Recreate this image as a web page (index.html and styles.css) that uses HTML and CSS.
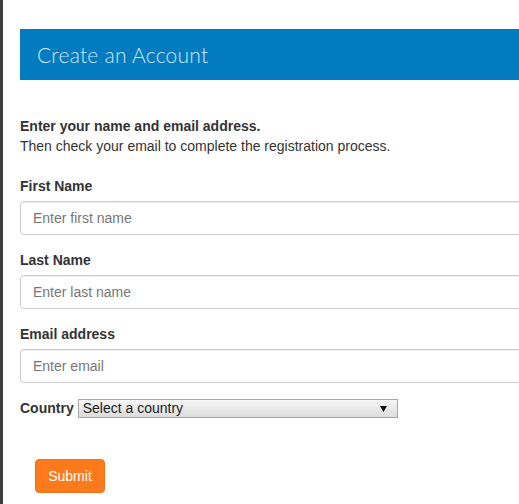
FILE: index.html
```html
<!DOCTYPE html>
<html>
<head>
<meta charset="utf-8">
<link rel="stylesheet" href="styles.css">
</head>
<body>
<div class="page">
  <div class="header"><h1 class="title">Create an Account</h1></div>
  <div class="intro">
    <p class="lead">Enter your name and email address.</p>
    <p class="sub">Then check your email to complete the registration process.</p>
  </div>
  <form class="form">
    <div class="group">
      <label class="label">First Name</label>
      <input class="input" type="text" placeholder="Enter first name">
    </div>
    <div class="group">
      <label class="label">Last Name</label>
      <input class="input" type="text" placeholder="Enter last name">
    </div>
    <div class="group">
      <label class="label">Email address</label>
      <input class="input" type="email" placeholder="Enter email">
    </div>
    <div class="country-row">
      <label class="label inline">Country</label>
      <span class="select-wrap">
        <select class="select"><option>Select a country</option></select>
        <svg class="arrow" width="7" height="6" viewBox="0 0 7 6"><path d="M0 0H7L3.5 6Z" fill="#111"/></svg>
      </span>
    </div>
    <div class="actions">
      <button class="submit" type="button">Submit</button>
    </div>
  </form>
</div>
</body>
</html>
```
FILE: styles.css
```css
* { box-sizing: border-box; }
html, body { margin: 0; padding: 0; background: #fff; overflow: hidden; }
body {
  font-family: "Liberation Sans", Arial, sans-serif;
  font-size: 14px;
  line-height: 20px;
  color: #333;
}
.page {
  width: 600px;
  min-height: 504px;
  border-left: 3px solid #3e3e3e;
  padding: 29px 0 0 17px;
}
.header {
  background: #027bc1;
  height: 51px;
  display: flex;
  align-items: center;
  padding-left: 17px;
}
.title {
  margin: 0;
  font-family: Lato, "Open Sans", sans-serif;
  font-weight: 300;
  font-size: 21px;
  letter-spacing: 0.25px;
  color: #d3e9f6;
  padding-top: 1px;
}
.intro { margin-top: 36px; margin-bottom: 20px; }
.intro p { margin: 0; }
.lead { font-weight: bold; }
.form { margin: 0; }
.group { margin-bottom: 15px; }
.label {
  display: block;
  font-weight: bold;
  margin-bottom: 5px;
}
.input {
  display: block;
  width: 560px;
  height: 34px;
  padding: 6px 12px;
  border: 1px solid #ccc;
  border-radius: 4px;
  font-family: "Liberation Sans", Arial, sans-serif;
  font-size: 14px;
  color: #555;
  box-shadow: inset 0 1px 1px rgba(0,0,0,0.075);
}
.input::placeholder { color: #777; }
.country-row {
  display: flex;
  align-items: center;
  height: 20px;
  margin-top: 0;
}
.label.inline { display: inline-block; margin: 0 4px 0 0; }
.select-wrap { position: relative; display: inline-block; }
.select {
  appearance: none;
  -webkit-appearance: none;
  width: 320px;
  height: 19px;
  border: 1px solid #a6a6a6;
  border-radius: 0;
  background: linear-gradient(#f6f6f6, #dcdcdc);
  font-family: "Liberation Sans", Arial, sans-serif;
  font-size: 14px;
  color: #222;
  padding: 0 0 0 4px;
  line-height: 17px;
  display: block;
}
.arrow {
  position: absolute;
  right: 11px;
  top: 7px;
  pointer-events: none;
}
.actions { padding: 41px 0 0 15px; }
.submit {
  width: 70px;
  height: 34px;
  background: #fd7a1c;
  border: 1px solid #f3751d;
  border-radius: 4px;
  color: #fff;
  font-family: "Liberation Sans", Arial, sans-serif;
  font-size: 14px;
  padding: 0;
}
```
